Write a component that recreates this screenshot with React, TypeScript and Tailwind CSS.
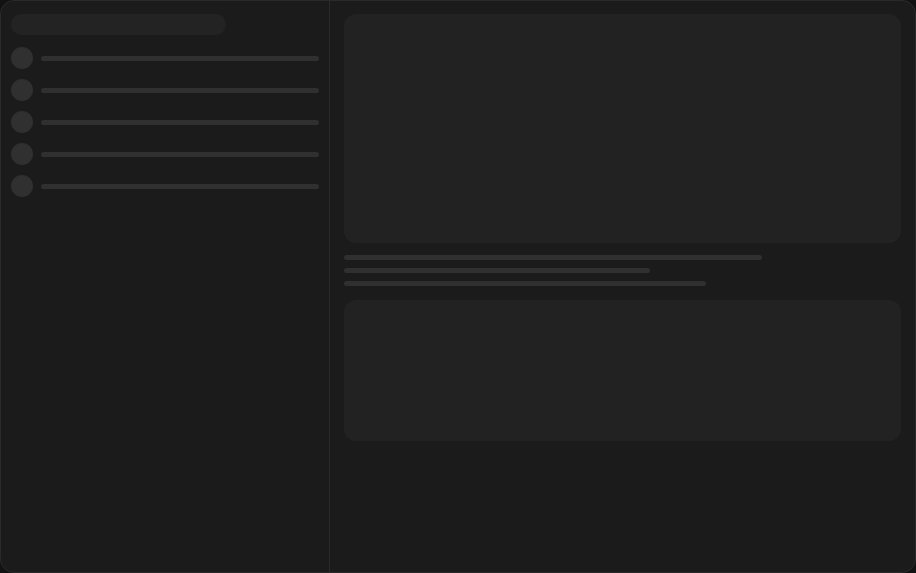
export default function App() {
  return (
    <div className="h-[573px] w-[916px] bg-[#121212]">
      <div className="flex h-full w-full overflow-hidden rounded-[14px] border border-[#2a2a2a] bg-[#1b1b1b]">
        <aside className="flex w-[329px] shrink-0 flex-col border-r border-[#2a2a2a] px-[10px] pt-[13px]">
          <div className="h-[21px] w-[215px] rounded-full bg-[#232323]" />
          <div className="mt-[12px] flex flex-col gap-[10px]">
            {[0, 1, 2, 3, 4].map((i) => (
              <div key={i} className="flex h-[22px] items-center gap-[8px]">
                <div className="h-[22px] w-[22px] shrink-0 rounded-full bg-[#303030]" />
                <div className="h-[5px] w-[278px] rounded-full bg-[#303030]" />
              </div>
            ))}
          </div>
        </aside>
        <main className="flex flex-1 flex-col px-[14px] pt-[13px]">
          <div className="h-[229px] rounded-xl bg-[#222222]" />
          <div className="mt-[12px] flex flex-col gap-[8px]">
            <div className="h-[5px] w-[418px] rounded-full bg-[#303030]" />
            <div className="h-[5px] w-[306px] rounded-full bg-[#303030]" />
            <div className="h-[5px] w-[362px] rounded-full bg-[#303030]" />
          </div>
          <div className="mt-[14px] h-[141px] rounded-xl bg-[#222222]" />
        </main>
      </div>
    </div>
  );
}
